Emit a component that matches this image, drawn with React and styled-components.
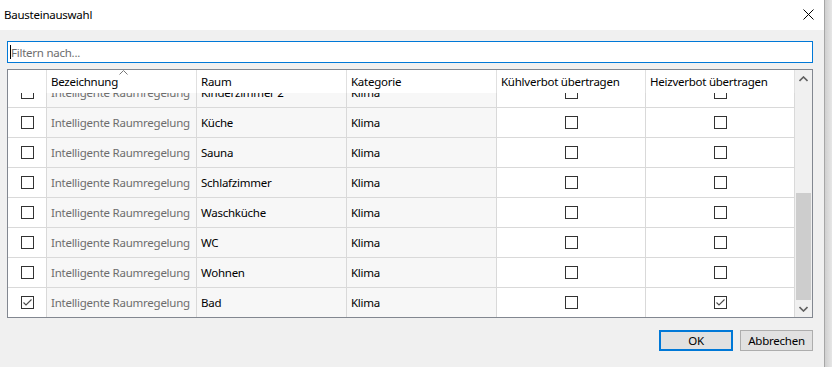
import React from 'react';
import styled, { createGlobalStyle } from 'styled-components';

const GlobalStyle = createGlobalStyle`
  html, body {
    margin: 0;
    padding: 0;
    background: #f0f0f0;
    font-family: "Noto Sans", "Open Sans", sans-serif;
    font-size: 11.5px;
    letter-spacing: -0.25px;
    overflow: hidden;
  }
`;

const rows = [
  { name: 'Intelligente Raumregelung', room: 'Kinderzimmer 2', category: 'Klima', selected: false, cool: false, heat: false },
  { name: 'Intelligente Raumregelung', room: 'Küche', category: 'Klima', selected: false, cool: false, heat: false },
  { name: 'Intelligente Raumregelung', room: 'Sauna', category: 'Klima', selected: false, cool: false, heat: false },
  { name: 'Intelligente Raumregelung', room: 'Schlafzimmer', category: 'Klima', selected: false, cool: false, heat: false },
  { name: 'Intelligente Raumregelung', room: 'Waschküche', category: 'Klima', selected: false, cool: false, heat: false },
  { name: 'Intelligente Raumregelung', room: 'WC', category: 'Klima', selected: false, cool: false, heat: false },
  { name: 'Intelligente Raumregelung', room: 'Wohnen', category: 'Klima', selected: false, cool: false, heat: false },
  { name: 'Intelligente Raumregelung', room: 'Bad', category: 'Klima', selected: true, cool: false, heat: true },
];

const columns = [
  { key: 'check', width: 39 },
  { key: 'name', width: 150, title: 'Bezeichnung', sorted: true },
  { key: 'room', width: 150, title: 'Raum' },
  { key: 'category', width: 150, title: 'Kategorie' },
  { key: 'cool', width: 149, title: 'Kühlverbot übertragen' },
  { key: 'heat', width: 149, title: 'Heizverbot übertragen' },
];

const CheckBox = ({ checked }) => (
  <Box>
    {checked && (
      <svg width="11" height="11" viewBox="0 0 11 11">
        <path d="M1.5 5.5 L4 8 L9.5 2.5" fill="none" stroke="#4a4a4a" strokeWidth="1.1" />
      </svg>
    )}
  </Box>
);

const App = () => {
  return (
    <>
      <GlobalStyle />
      <Screen>
        <Dialog>
          <TitleBar>
            <Title>Bausteinauswahl</Title>
            <CloseButton>
              <svg width="11" height="11" viewBox="0 0 11 11">
                <path d="M0.5 0.5 L10.5 10.5 M10.5 0.5 L0.5 10.5" stroke="#000" strokeWidth="1" />
              </svg>
            </CloseButton>
          </TitleBar>

          <Content>
            <FilterWrap>
              <FilterInput placeholder="Filtern nach..." />
              <Caret />
            </FilterWrap>

            <Grid>
              <Table>
                <HeaderRow>
                  {columns.map((col) => (
                    <HeaderCell key={col.key} $width={col.width}>
                      {col.sorted && (
                        <SortArrow>
                          <svg width="9" height="5" viewBox="0 0 9 5">
                            <path d="M0.5 4.5 L4.5 0.5 L8.5 4.5" fill="none" stroke="#777" strokeWidth="1" />
                          </svg>
                        </SortArrow>
                      )}
                      {col.title}
                    </HeaderCell>
                  ))}
                </HeaderRow>
                <Body>
                  <RowList>
                    {rows.map((row, i) => (
                      <Row key={i}>
                        <Cell $width={39} $center>
                          <CheckBox checked={row.selected} />
                        </Cell>
                        <Cell $width={150} $readonly $muted>{row.name}</Cell>
                        <Cell $width={150} $readonly>{row.room}</Cell>
                        <Cell $width={150} $readonly>{row.category}</Cell>
                        <Cell $width={149} $center>
                          <CheckBox checked={row.cool} />
                        </Cell>
                        <Cell $width={149} $center>
                          <CheckBox checked={row.heat} />
                        </Cell>
                      </Row>
                    ))}
                  </RowList>
                </Body>
              </Table>

              <ScrollBar>
                <ScrollArrow>
                  <svg width="9" height="6" viewBox="0 0 9 6">
                    <path d="M0.5 5 L4.5 1 L8.5 5" fill="none" stroke="#606060" strokeWidth="1.6" />
                  </svg>
                </ScrollArrow>
                <ScrollTrack>
                  <Thumb />
                </ScrollTrack>
                <ScrollArrow>
                  <svg width="9" height="6" viewBox="0 0 9 6">
                    <path d="M0.5 1 L4.5 5 L8.5 1" fill="none" stroke="#606060" strokeWidth="1.6" />
                  </svg>
                </ScrollArrow>
              </ScrollBar>
            </Grid>

            <ButtonRow>
              <Button $primary>OK</Button>
              <Button>Abbrechen</Button>
            </ButtonRow>
          </Content>
        </Dialog>
        <WindowEdge />
      </Screen>
    </>
  );
};

const Screen = styled.div`
  display: flex;
  width: 832px;
  height: 367px;
`;

const Dialog = styled.div`
  width: 824px;
  display: flex;
  flex-direction: column;
  background: #f0f0f0;
`;

const WindowEdge = styled.div`
  flex: 1;
  border-left: 1px solid #a6a6a6;
  background: linear-gradient(to right, #cfcfcf, #e6e6e6);
`;

const TitleBar = styled.div`
  height: 30px;
  flex-shrink: 0;
  background: #fff;
  display: flex;
  align-items: center;
  justify-content: space-between;
  padding: 0 10px 0 4px;
`;

const Title = styled.div`
  color: #000;
  margin-top: -1px;
`;

const CloseButton = styled.div`
  width: 11px;
  height: 11px;
  display: flex;
  margin-top: -1px;
`;

const Content = styled.div`
  flex: 1;
  display: flex;
  flex-direction: column;
  padding: 11px 11px 0 7px;
`;

const FilterWrap = styled.div`
  position: relative;
  height: 22px;
`;

const FilterInput = styled.input`
  box-sizing: border-box;
  width: 100%;
  height: 22px;
  margin: 0;
  border: 1px solid #0078d7;
  outline: none;
  background: #fff;
  padding: 0 0 0 3px;
  font-family: inherit;
  font-size: inherit;
  letter-spacing: inherit;
  color: #000;

  &::placeholder {
    color: #6d6d6d;
  }
`;

const Caret = styled.span`
  position: absolute;
  left: 3px;
  top: 4px;
  width: 1px;
  height: 14px;
  background: #000;
`;

const Grid = styled.div`
  margin-top: 6px;
  height: 249px;
  box-sizing: border-box;
  border: 1px solid #828790;
  background: #fff;
  display: flex;
`;

const Table = styled.div`
  width: 787px;
  display: flex;
  flex-direction: column;
`;

const HeaderRow = styled.div`
  display: flex;
  height: 23px;
  flex-shrink: 0;
  background: #fff;
  position: relative;
  z-index: 1;
`;

const HeaderCell = styled.div`
  position: relative;
  box-sizing: border-box;
  width: ${(p) => p.$width}px;
  border-right: 1px solid #e0e0e0;
  padding: 4px 0 0 4px;
  color: #000;
  white-space: nowrap;
  overflow: hidden;
`;

const SortArrow = styled.span`
  position: absolute;
  top: 0;
  left: 72px;
  display: flex;
`;

const Body = styled.div`
  flex: 1;
  overflow: hidden;
`;

const RowList = styled.div`
  margin-top: -15px;
`;

const Row = styled.div`
  display: flex;
  height: 30px;
  box-sizing: border-box;
  border-bottom: 1px solid #d9d9d9;
`;

const Cell = styled.div`
  box-sizing: border-box;
  width: ${(p) => p.$width}px;
  border-right: 1px solid #d9d9d9;
  background: ${(p) => (p.$readonly ? '#f7f7f7' : '#fff')};
  color: ${(p) => (p.$muted ? '#6d6d6d' : '#000')};
  display: flex;
  align-items: center;
  justify-content: ${(p) => (p.$center ? 'center' : 'flex-start')};
  padding-left: ${(p) => (p.$center ? 0 : 4)}px;
  white-space: nowrap;
  overflow: hidden;
`;

const Box = styled.div`
  width: 13px;
  height: 13px;
  box-sizing: border-box;
  border: 1px solid #333;
  background: #fff;
  display: flex;
  align-items: center;
  justify-content: center;
`;

const ScrollBar = styled.div`
  width: 17px;
  background: #f0f0f0;
  display: flex;
  flex-direction: column;
`;

const ScrollArrow = styled.div`
  height: 17px;
  display: flex;
  align-items: center;
  justify-content: center;
`;

const ScrollTrack = styled.div`
  flex: 1;
  display: flex;
  flex-direction: column;
  justify-content: flex-end;
  padding: 0 1px;
`;

const Thumb = styled.div`
  height: 107px;
  background: #cdcdcd;
`;

const ButtonRow = styled.div`
  display: flex;
  justify-content: flex-end;
  gap: 7px;
  margin-top: 12px;
`;

const Button = styled.button`
  box-sizing: border-box;
  height: 21px;
  width: ${(p) => (p.$primary ? 74 : 73)}px;
  margin: 0;
  padding: 0;
  background: #e1e1e1;
  border: ${(p) => (p.$primary ? '2px solid #0078d7' : '1px solid #adadad')};
  font-family: inherit;
  font-size: inherit;
  letter-spacing: inherit;
  color: #000;
`;

export default App;
